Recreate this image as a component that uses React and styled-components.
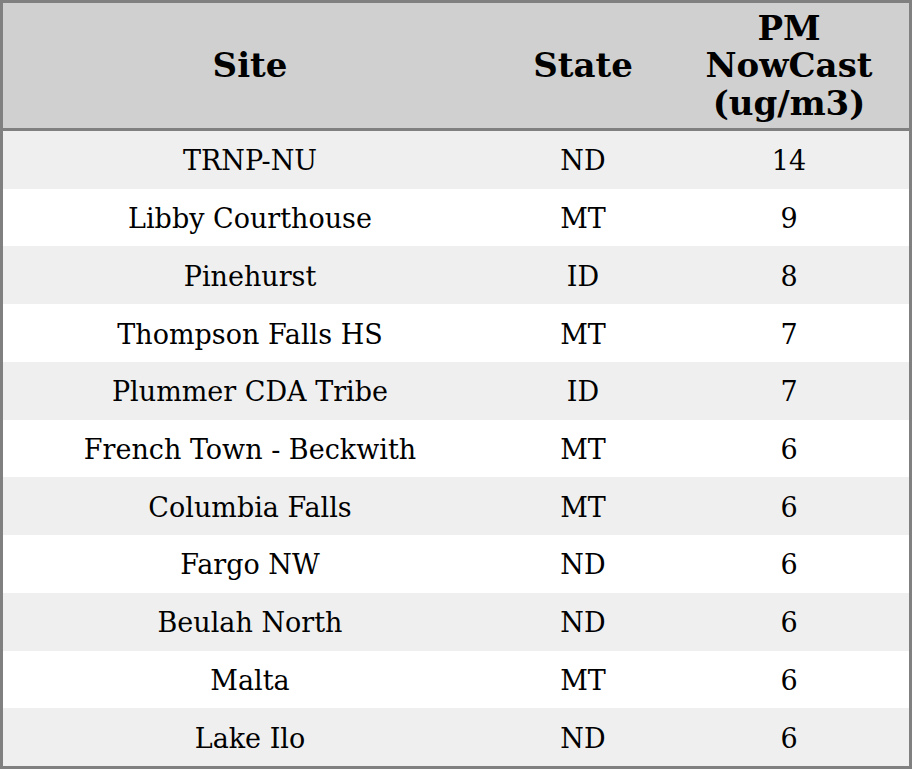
import React from "react";
import styled, { createGlobalStyle } from "styled-components";

const Global = createGlobalStyle`
  html, body { margin: 0; padding: 0; background: #ffffff; }
  #root { width: 912px; height: 769px; }
`;

const Table = styled.div`
  box-sizing: border-box;
  width: 912px;
  height: 769px;
  border: 3px solid #808080;
  display: grid;
  grid-template-columns: 494px 172px 240px;
  grid-template-rows: 128px repeat(11, 1fr);
  font-family: "DejaVu Serif", "Liberation Serif", serif;
  color: #000000;
`;

const HeadCell = styled.div`
  background: #d0d0d0;
  border-bottom: 3px solid #808080;
  display: flex;
  align-items: center;
  justify-content: center;
  text-align: center;
  font-weight: bold;
  font-size: 34px;
  line-height: 37.5px;
  padding-top: 1px;
`;

const Cell = styled.div`
  background: ${(p) => (p.$shade ? "#efefef" : "#ffffff")};
  display: flex;
  align-items: center;
  justify-content: center;
  text-align: center;
  font-size: 27px;
  padding-top: 2px;
`;

const rows = [
  ["TRNP-NU", "ND", "14"],
  ["Libby Courthouse", "MT", "9"],
  ["Pinehurst", "ID", "8"],
  ["Thompson Falls HS", "MT", "7"],
  ["Plummer CDA Tribe", "ID", "7"],
  ["French Town - Beckwith", "MT", "6"],
  ["Columbia Falls", "MT", "6"],
  ["Fargo NW", "ND", "6"],
  ["Beulah North", "ND", "6"],
  ["Malta", "MT", "6"],
  ["Lake Ilo", "ND", "6"],
];

export default function App() {
  return (
    <>
      <Global />
      <Table>
        <HeadCell>Site</HeadCell>
        <HeadCell>State</HeadCell>
        <HeadCell>
          PM
          <br />
          NowCast
          <br />
          (ug/m3)
        </HeadCell>
        {rows.map((r, i) =>
          r.map((v, j) => (
            <Cell key={`${i}-${j}`} $shade={i % 2 === 0}>
              {v}
            </Cell>
          ))
        )}
      </Table>
    </>
  );
}
